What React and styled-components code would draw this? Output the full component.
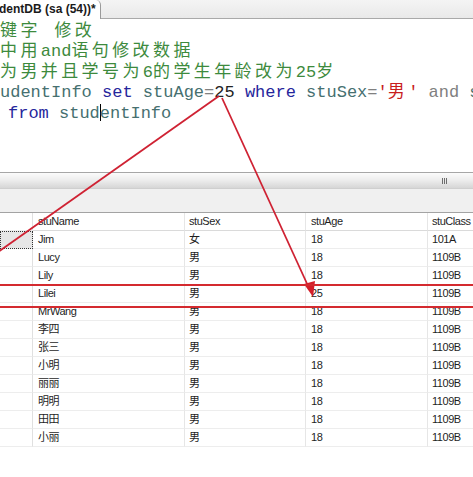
import styled, { createGlobalStyle } from "styled-components";

const GlobalStyle = createGlobalStyle`
  html, body {
    margin: 0;
    padding: 0;
    background: #ffffff;
    overflow: hidden;
  }
`;

const Page = styled.div`
  position: relative;
  width: 473px;
  height: 477px;
  overflow: hidden;
  background: #fff;
`;

const TabBar = styled.div`
  display: flex;
  height: 18px;
  background: linear-gradient(#f4f4f4, #e9e9e9);
  border-bottom: 1px solid #a9a9a9;
`;

const Tab = styled.div`
  width: 100px;
  height: 19px;
  margin-bottom: -1px;
  background: #fff;
  border-right: 1px solid #9a9a9a;
  border-top-right-radius: 5px;
  font-family: "Liberation Sans", sans-serif;
  font-weight: bold;
  font-size: 12px;
  line-height: 18px;
  color: #1b1b1b;
  white-space: nowrap;
  overflow: hidden;
  text-indent: -1px;
`;

const Editor = styled.div`
  height: 150px;
  padding-top: 3px;
  overflow: hidden;
  background: #fff;
  font-family: "Liberation Mono", "Noto Sans CJK SC", monospace;
  font-size: 17px;
  white-space: pre;
`;

const Line = styled.div`
  height: 20.4px;
  line-height: 20.4px;
  padding-left: ${(p) => p.$indent || 0}px;
  color: ${(p) => (p.$comment ? "#3d8a3d" : "#222")};
  letter-spacing: ${(p) => (p.$comment ? "3.4px" : "0")};
`;

const Latin = styled.span`
  letter-spacing: 0;
`;

const Kw = styled.span`
  color: #26269c;
`;

const Ident = styled.span`
  color: #467070;
`;

const Op = styled.span`
  color: #808080;
`;

const Str = styled.span`
  color: #c81e1e;
`;

const Han = styled.span`
  letter-spacing: 3.4px;
`;

const Caret = styled.span`
  display: inline-block;
  width: 1px;
  height: 17px;
  margin-right: -1px;
  vertical-align: -3px;
  background: #000;
`;

const HScroll = styled.div`
  height: 15px;
  border-top: 1px solid #a6a6a6;
  background: linear-gradient(#fbfbfb, #ececec 50%, #d6d6d6);
  display: flex;
  justify-content: flex-end;
  align-items: center;
  padding-right: 26px;
`;

const Grip = styled.div`
  display: flex;
  gap: 1px;
  span {
    width: 1px;
    height: 6px;
    background: #6d6d6d;
  }
`;

const ResultsBar = styled.div`
  height: 23px;
  background: #f0f0f0;
  border-top: 1px solid #cfcfcf;
  border-bottom: 1px solid #a3a3a3;
`;

const Grid = styled.div`
  display: grid;
  grid-template-columns: 33px 152px 121px 122px 80px;
  font-family: "Liberation Sans", "Noto Sans CJK SC", sans-serif;
  font-size: 11px;
  color: #1e1e1e;
`;

const Cell = styled.div`
  height: 17px;
  line-height: 17px;
  padding-left: ${(p) => (p.$narrow ? 4 : 5)}px;
  border-bottom: 1px solid ${(p) => (p.$head ? "#dadada" : "#ededed")};
  border-right: 1px solid #e6e6e6;
  white-space: nowrap;
  overflow: hidden;
  letter-spacing: -0.45px;
`;

const RowHead = styled.div`
  box-sizing: border-box;
  height: 18px;
  border-bottom: 1px solid #ededed;
  border-right: 1px solid #e0e0e0;
  background: ${(p) => (p.$selected ? "#e6e6e6" : "#fff")};
  outline: ${(p) => (p.$selected ? "1px dotted #333" : "none")};
  outline-offset: -1px;
`;

const Overlay = styled.svg`
  position: absolute;
  left: 0;
  top: 0;
  pointer-events: none;
`;

const rows = [
  ["Jim", "女", "18", "101A"],
  ["Lucy", "男", "18", "1109B"],
  ["Lily", "男", "18", "1109B"],
  ["Lilei", "男", "25", "1109B"],
  ["MrWang", "男", "18", "1109B"],
  ["李四", "男", "18", "1109B"],
  ["张三", "男", "18", "1109B"],
  ["小明", "男", "18", "1109B"],
  ["丽丽", "男", "18", "1109B"],
  ["明明", "男", "18", "1109B"],
  ["田田", "男", "18", "1109B"],
  ["小丽", "男", "18", "1109B"],
];

const App = () => {
  return (
    <Page>
      <GlobalStyle />
      <TabBar>
        <Tab>dentDB (sa (54))*</Tab>
      </TabBar>
      <Editor>
        <Line $comment $indent={-3.4}>键字 修改</Line>
        <Line $comment $indent={-10.4}>
          中用<Latin>and</Latin>语句修改数据
        </Line>
        <Line $comment $indent={-12.4}>
          为男并且学号为<Latin>6</Latin>的学生年龄改为<Latin>25</Latin>岁
        </Line>
        <Line $indent={0}>
          <Ident>udentInfo</Ident> <Kw>set</Kw> <Ident>stuAge</Ident>
          <Op>=</Op>25 <Kw>where</Kw> <Ident>stuSex</Ident>
          <Op>=</Op>
          <Str>
            '<Han>男</Han>'
          </Str>{" "}
          <Op>and</Op> <Ident>stuID</Ident>
          <Op>=</Op>6
        </Line>
        <Line $indent={8}>
          <Kw>from</Kw> <Ident>stud<Caret />entInfo</Ident>
        </Line>
      </Editor>
      <HScroll>
        <Grip>
          <span />
          <span />
          <span />
        </Grip>
      </HScroll>
      <ResultsBar />
      <Grid>
        <RowHead />
        <Cell $head>stuName</Cell>
        <Cell $head $narrow>stuSex</Cell>
        <Cell $head>stuAge</Cell>
        <Cell $head $narrow>stuClass</Cell>
        {rows.map((r, i) => (
          <>
            <RowHead key={"h" + i} $selected={i === 0} />
            <Cell key={"n" + i}>{r[0]}</Cell>
            <Cell key={"s" + i} $narrow>{r[1]}</Cell>
            <Cell key={"a" + i}>{r[2]}</Cell>
            <Cell key={"c" + i} $narrow>{r[3]}</Cell>
          </>
        ))}
      </Grid>
      <Overlay width="473" height="477" viewBox="0 0 473 477">
        <line x1="219" y1="96" x2="-12" y2="259" stroke="#cf2233" strokeWidth="1.8" />
        <line x1="222" y1="98" x2="309" y2="288" stroke="#cf2233" strokeWidth="1.8" />
        <polygon points="313,297 304,284 315,281" fill="#d41f2a" />
        <rect x="-5" y="285" width="485" height="22" fill="none" stroke="#d42a2f" strokeWidth="2" />
      </Overlay>
    </Page>
  );
};

export default App;
